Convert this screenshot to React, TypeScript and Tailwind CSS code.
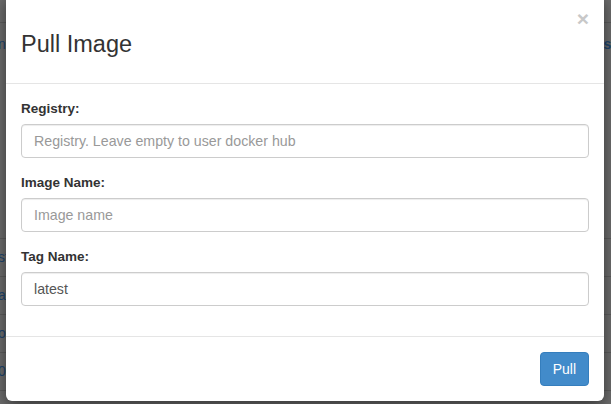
const rows = [
  { left: 'sf', right: '' },
  { left: 'a', right: '' },
  { left: 'o', right: '' },
  { left: '0', right: '' },
]

function Field({ label, placeholder, value }: { label: string; placeholder: string; value?: string }) {
  return (
    <div className="mb-[15px] last:mb-0">
      <label className="block mb-[5px] text-[13.5px] leading-[20px] font-bold text-[#333]">{label}</label>
      <input
        type="text"
        placeholder={placeholder}
        defaultValue={value}
        className="block w-full h-[34px] px-[12px] text-[14.2px] text-[#555] placeholder:text-[#999] bg-white border border-[#ccc] rounded-[4px] shadow-[inset_0_1px_1px_rgba(0,0,0,0.075)] focus:outline-none"
      />
    </div>
  )
}

export default function App() {
  return (
    <div className="relative w-[611px] h-[404px] overflow-hidden bg-[#6d6d6d] font-['Liberation_Sans',Arial,sans-serif]">
      {/* page behind the backdrop */}
      <div className="flex flex-col text-[14px] text-[#20456d]">
        <div className="h-[23px] border-b border-[#5d5d5d]" />
        <div className="h-[216px] border-b border-[#5d5d5d] flex justify-between items-start pt-[11px]">
          <span className="-ml-[5px]">in</span>
          <span className="mr-[-8px] font-bold">ss</span>
        </div>
        {rows.map((r) => (
          <div key={r.left} className="h-[38px] border-b border-[#5d5d5d] flex items-center">
            <span className="-ml-[2px]">{r.left}</span>
          </div>
        ))}
      </div>

      {/* modal */}
      <div className="absolute left-[6px] top-[-6px] w-[598px] bg-white rounded-[6px] shadow-[0_5px_15px_rgba(0,0,0,0.5)]">
        <div className="relative h-[90px] px-[15px] pt-[37px] border-b border-[#e5e5e5]">
          <h3 className="text-[23.5px] leading-[26px] text-[#333]">Pull Image</h3>
          <button className="absolute right-[15px] top-[14px] text-[21px] leading-none font-bold text-[#c8c8c8]">×</button>
        </div>
        <div className="p-[15px]">
          <Field label="Registry:" placeholder="Registry. Leave empty to user docker hub" />
          <Field label="Image Name:" placeholder="Image name" />
          <Field label="Tag Name:" placeholder="" value="latest" />
        </div>
        <div className="mt-[15px] p-[15px] border-t border-[#e5e5e5] flex justify-end">
          <button className="h-[34px] px-[12px] text-[14px] text-white bg-[#428bca] border border-[#357ebd] rounded-[4px]">
            Pull
          </button>
        </div>
      </div>
    </div>
  )
}
